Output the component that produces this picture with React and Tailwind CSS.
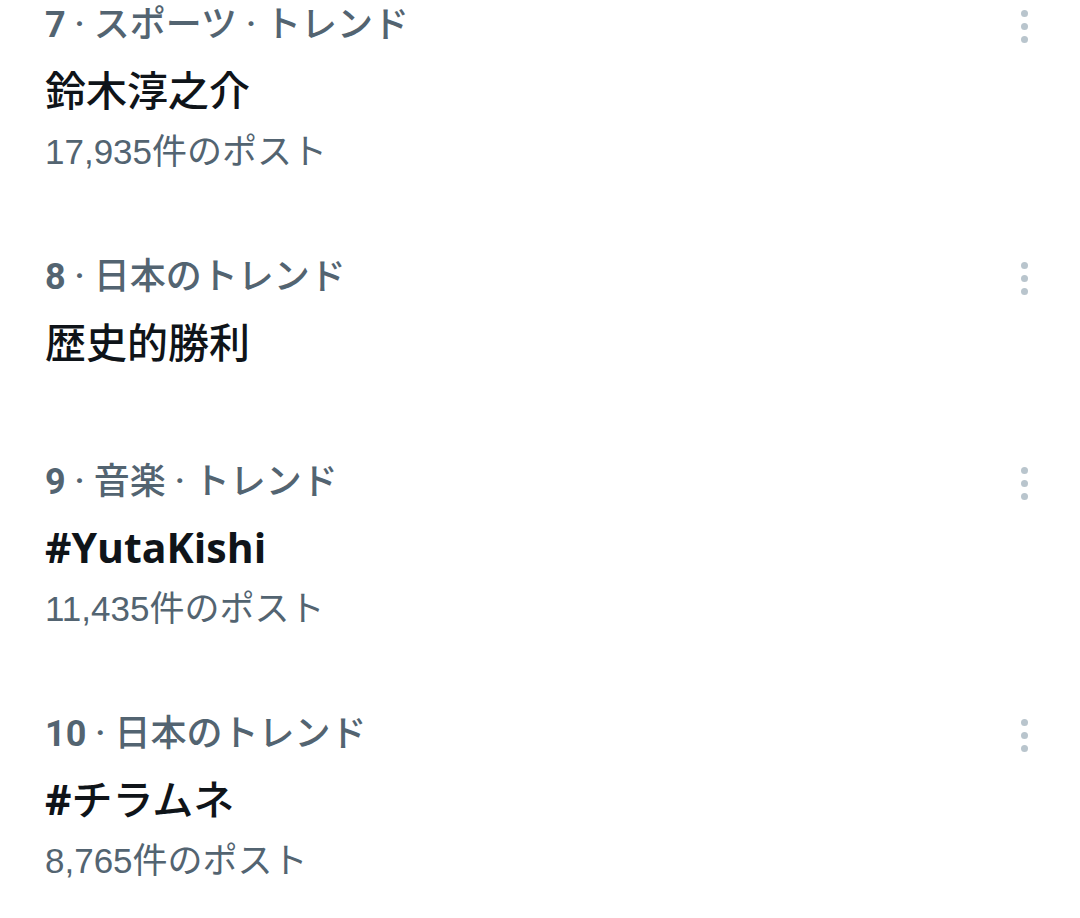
const trends = [
  { rank: 7, category: "スポーツ · トレンド", title: "鈴木淳之介", count: "17,935件のポスト" },
  { rank: 8, category: "日本のトレンド", title: "歴史的勝利" },
  { rank: 9, category: "音楽 · トレンド", title: "#YutaKishi", count: "11,435件のポスト", latin: true },
  { rank: 10, category: "日本のトレンド", title: "#チラムネ", count: "8,765件のポスト" },
];

function MoreIcon() {
  return (
    <div className="flex flex-col items-center gap-[6px] pt-[10px]">
      <span className="w-[7px] h-[7px] rounded-full bg-[#b9c5cd]" />
      <span className="w-[7px] h-[7px] rounded-full bg-[#b9c5cd]" />
      <span className="w-[7px] h-[7px] rounded-full bg-[#b9c5cd]" />
    </div>
  );
}

export default function App() {
  return (
    <div
      className="w-[1080px] h-[918px] bg-white overflow-hidden"
      style={{ fontFamily: 'Roboto, "Noto Sans CJK JP", sans-serif' }}
    >
      {trends.map((t) => (
        <div
          key={t.rank}
          className={`flex justify-between pl-[45px] pr-[52px] ${t.count ? "pb-[78px]" : "pb-[75px]"}`}
        >
          <div className="flex flex-col">
            <div className="text-[36px] leading-[50px] text-[#536471] whitespace-nowrap font-medium">
              <span className="font-bold">{t.rank}</span>
              <span> · {t.category}</span>
            </div>
            <div
              className={`text-[41px] leading-[80px] text-[#0f1419] whitespace-nowrap font-['Open_Sans','Noto_Sans_CJK_JP',sans-serif] ${t.latin ? "font-bold" : "font-medium"}`}
            >
              {t.title.startsWith("#") && !t.latin ? (
                <>
                  <span className="font-bold">#</span>
                  {t.title.slice(1)}
                </>
              ) : (
                t.title
              )}
            </div>
            {t.count && (
              <div className="text-[35px] leading-[44px] text-[#536471] whitespace-nowrap font-['Liberation_Sans','Noto_Sans_CJK_JP',sans-serif]">
                {t.count}
              </div>
            )}
          </div>
          <MoreIcon />
        </div>
      ))}
    </div>
  );
}
